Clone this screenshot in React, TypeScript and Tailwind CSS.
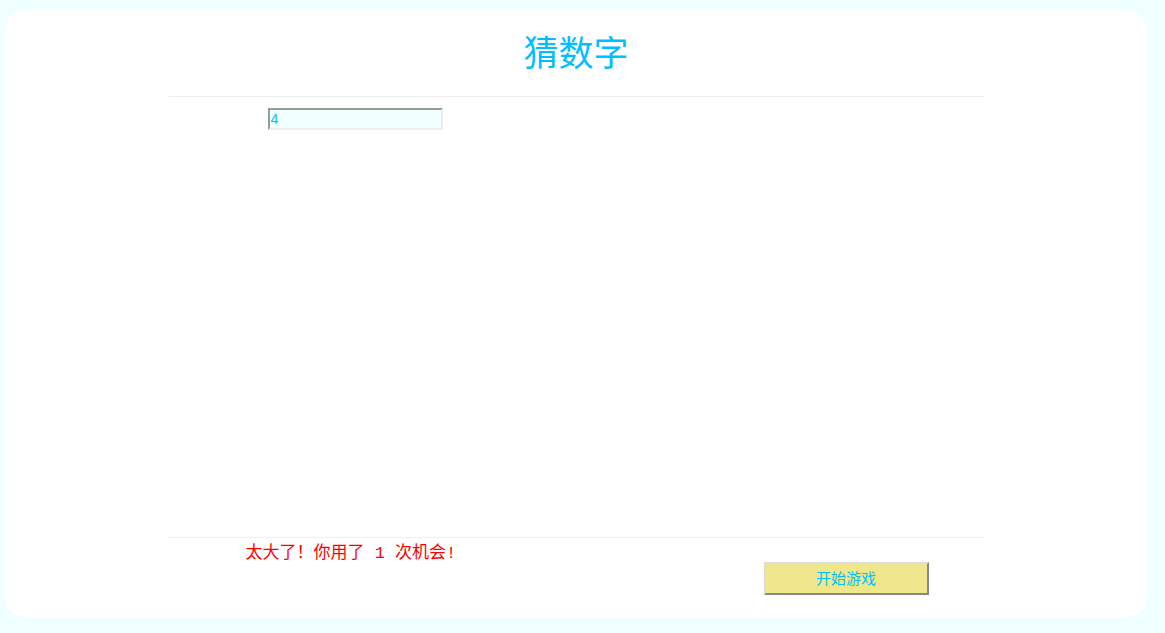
export default function App() {
  return (
    <div className="min-h-[633px] w-full bg-[#f0ffff] pt-[10px] pl-[5px] pr-[18px] pb-[16px]">
      <div
        className="flex h-[607px] w-[1142px] flex-col items-center rounded-[20px] bg-white"
        style={{ fontFamily: '"Liberation Serif", "Noto Sans CJK SC", serif' }}
      >
        <h1 className="mt-[23px] h-[44px] text-[35px] leading-[44px] text-[#00bfff]">猜数字</h1>

        <div className="mt-[19px] flex h-[441px] w-[815px] flex-col border-t border-[#eeeeee]">
          <div className="pl-[99px] pt-[10px]">
            <input
              defaultValue="4"
              className="h-[22px] w-[175px] border-2 border-t-[#999999] border-l-[#999999] border-b-[#eeeeee] border-r-[#eeeeee] bg-[#f0ffff] px-[1px] text-[14px] text-[#00bfff] outline-none"
              style={{ fontFamily: '"Liberation Sans", Arial, sans-serif' }}
            />
          </div>
        </div>

        <div className="w-[815px] border-t border-[#eeeeee]">
          <p
            className="pl-[77px] pt-[8px] text-[17px] leading-[16px] text-[#ff0000]"
            style={{ fontFamily: '"Liberation Mono", "Noto Sans CJK SC", monospace' }}
          >
            太大了！你用了 1 次机会!
          </p>
          <div className="flex pl-[595px]">
            <button
              className="h-[33px] w-[165px] border-2 border-t-[#dddddd] border-l-[#dddddd] border-b-[#888888] border-r-[#888888] bg-[#f0e68c] text-[15px] text-[#00bfff]"
              style={{ fontFamily: '"Noto Sans CJK SC", sans-serif' }}
            >
              开始游戏
            </button>
          </div>
        </div>
      </div>
    </div>
  );
}
